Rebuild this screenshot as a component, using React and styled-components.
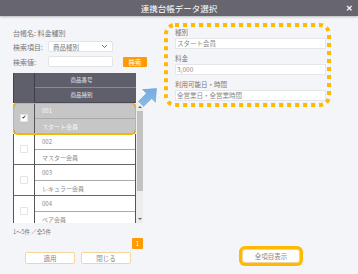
import styled, { createGlobalStyle } from 'styled-components';

const GlobalStyle = createGlobalStyle`
  html, body {
    margin: 0;
    padding: 0;
    background: #f4f5f9;
  }

  body {
    font-family: "Noto Sans CJK JP", "Noto Sans", sans-serif;
    color: #777;
  }
`;

const Dialog = styled.div`
  width: 358px;
  height: 274px;
  display: flex;
  flex-direction: column;
  overflow: hidden;
`;

const TitleBar = styled.header`
  flex: none;
  height: 16px;
  display: grid;
  grid-template-columns: 1fr auto 1fr;
  align-items: center;
  background: #67666f;
  color: #fff;
  box-shadow: 0 1px 2px rgba(0, 0, 0, .25);
`;

const Title = styled.h1`
  grid-column: 2;
  margin: 0;
  font-size: 8.5px;
  font-weight: 400;
  line-height: 16px;
`;

const Close = styled.span`
  justify-self: end;
  margin-right: 5px;
  font-family: "DejaVu Sans", sans-serif;
  font-size: 9px;
  font-weight: 700;
  line-height: 16px;
`;

const Body = styled.div`
  flex: 1;
  position: relative;
  display: grid;
  grid-template-columns: 150px 1fr;
`;

const LeftPane = styled.section`
  display: flex;
  flex-direction: column;
  padding: 12px 0 0 13px;
`;

const Info = styled.div`
  font-size: 7px;
  line-height: 10px;
`;

const FieldRow = styled.div`
  display: flex;
  align-items: center;
  height: 11px;
  margin-top: ${p => p.$gap}px;
`;

const FieldLabel = styled.span`
  width: 35px;
  font-size: 7px;
`;

const SelectBox = styled.div`
  box-sizing: border-box;
  width: 65px;
  height: 11px;
  display: flex;
  align-items: center;
  justify-content: space-between;
  padding: 0 4px;
  background: #fff;
  border: 1px solid #e4e4e6;
  border-radius: 2px;
  font-size: 6.5px;
  color: #777;
`;

const TextBox = styled.div`
  box-sizing: border-box;
  width: 65px;
  height: 11px;
  background: #fff;
  border: 1px solid #e4e4e6;
  border-radius: 2px;
`;

const SearchButton = styled.button`
  width: 24px;
  height: 10px;
  margin-left: 10px;
  padding: 0;
  border: 0;
  border-radius: 1px;
  background: #ff9a00;
  color: #fff;
  font-family: inherit;
  font-size: 6.5px;
  line-height: 10px;
`;

const TableFrame = styled.div`
  margin-top: 6px;
  width: 130px;
  display: grid;
  grid-template-columns: 123px 7px;
  grid-template-rows: 30px 120px;
`;

const Head = styled.div`
  display: grid;
  grid-template-columns: 21px 1fr;
  grid-template-rows: 15px 15px;
  background: #5f5e6b;
  border-left: 1px solid #45444f;
`;

const HeadCheck = styled.div`
  grid-row: span 2;
  border-right: 1px solid #3e3d49;
`;

const HeadCell = styled.div`
  display: flex;
  align-items: center;
  justify-content: center;
  padding-right: 8px;
  font-size: 5.5px;
  color: #e4e4e8;
  border-bottom: 1px solid ${p => (p.$last ? '#4a4956' : '#8b8a95')};
`;

const Rows = styled.div`
  grid-column: 1;
  overflow: hidden;
  background: #fff;
`;

const Row = styled.div`
  position: relative;
  display: grid;
  grid-template-columns: 21px 1fr;
  border-left: 1px solid #555;
  border-right: 1px solid #555;
  background: ${p => (p.$selected ? '#c6c6c6' : '#fff')};
  color: ${p => (p.$selected ? '#f6f6f6' : '#888')};
  ${p => p.$selected && `
    z-index: 1;
    outline: 2px solid #f7b500;
    outline-offset: -1px;
    border-radius: 5px;
  `}
`;

const CheckCell = styled.div`
  grid-row: span 2;
  display: flex;
  align-items: center;
  justify-content: center;
  border-right: 1px solid #555;
  border-bottom: 1px solid #666;
`;

const Check = styled.span`
  box-sizing: border-box;
  width: 8px;
  height: 8px;
  display: flex;
  align-items: center;
  justify-content: center;
  background: #fff;
  border: 1px solid #e2e2e2;
  border-radius: 1px;
  color: #333;
  font-family: "DejaVu Sans", sans-serif;
  font-size: 5.5px;
  line-height: 1;
`;

const SubCell = styled.div`
  height: ${p => (p.$last ? 14 : 15)}px;
  display: flex;
  align-items: center;
  padding-left: 7px;
  font-size: 6px;
  border-bottom: 1px solid ${p => (p.$last ? '#666' : '#a9a9a9')};
`;

const Scrollbar = styled.div`
  grid-column: 2;
  display: flex;
  flex-direction: column;
  align-items: center;
  background: #ededed;
`;

const ScrollArrow = styled.span`
  width: 0;
  height: 0;
  margin: 3px 0 2px;
  border-left: 2px solid transparent;
  border-right: 2px solid transparent;
  ${p => (p.$down
    ? 'border-top: 2px solid #666; margin-top: auto; margin-bottom: 3px;'
    : 'border-bottom: 2px solid #666;')}
`;

const Thumb = styled.span`
  width: 6px;
  height: 80px;
  margin-top: 1px;
  background: #c2c2c2;
`;

const Count = styled.div`
  margin-top: 4px;
  height: 10px;
  display: flex;
  align-items: center;
  font-size: 5.5px;
`;

const Badge = styled.span`
  align-self: flex-end;
  width: 11px;
  height: 11px;
  margin: 1px 7px 0 0;
  display: flex;
  align-items: center;
  justify-content: center;
  background: #ff9a00;
  border-radius: 1px;
  color: #fff;
  font-size: 6px;
`;

const ButtonRow = styled.div`
  width: 130px;
  margin-top: 3px;
  display: flex;
  justify-content: center;
  gap: 6px;
`;

const Button = styled.button`
  box-sizing: border-box;
  width: ${p => p.$width || 50}px;
  height: ${p => p.$height || 12}px;
  display: flex;
  align-items: center;
  justify-content: center;
  padding: 0;
  background: #fff;
  border: 1px solid #f6d59c;
  border-radius: 2px;
  color: #888;
  font-family: inherit;
  font-size: 6.5px;
`;

const RightPane = styled.section`
  display: flex;
  flex-direction: column;
  padding: 7px 0 0 14px;
`;

const Highlight = styled.div`
  position: relative;
  box-sizing: border-box;
  width: 167px;
  height: 84px;
  padding: 4px 5px 6px 11px;
`;

const DottedFrame = styled.svg`
  position: absolute;
  inset: 0;
  width: 167px;
  height: 84px;
  pointer-events: none;
`;

const Field = styled.div`
  margin-top: ${p => p.$gap || 0}px;
`;

const FieldName = styled.div`
  font-size: 6.5px;
  line-height: 10px;
  color: #777;
`;

const FieldValue = styled.div`
  box-sizing: border-box;
  height: 11px;
  margin-top: 1px;
  padding-left: 1px;
  background: #fff;
  border: 1px solid #e6e6ea;
  font-size: 6.5px;
  line-height: 9px;
  color: #888;
`;

const ShowAll = styled(Button)`
  margin: auto 0 11px 78px;
  border-radius: 3px;
  box-shadow: 0 0 0 3px #ffb900;
`;

const Arrow = styled.svg`
  position: absolute;
  left: 136px;
  top: 67px;
  width: 26px;
  height: 26px;
`;

const Chevron = () => (
  <svg width="7" height="5" viewBox="0 0 7 5">
    <polyline points="1,1 3.5,3.5 6,1" fill="none" stroke="#777" strokeWidth="1" />
  </svg>
);

const rows = [
  { no: '001', kind: 'スタート会員', checked: true },
  { no: '002', kind: 'マスター会員' },
  { no: '003', kind: 'レキュラー会員' },
  { no: '004', kind: 'ペア会員' },
  { no: '005', kind: 'ファミリー会員' },
];

const fields = [
  { name: '種別', value: 'スタート会員' },
  { name: '料金', value: '3,000' },
  { name: '利用可能日・時間', value: '全営業日・全営業時間' },
];

export default function App() {
  return (
    <Dialog>
      <GlobalStyle />
      <TitleBar>
        <Title>連携台帳データ選択</Title>
        <Close>×</Close>
      </TitleBar>

      <Body>
        <LeftPane>
          <Info>台帳名: 料金種別</Info>
          <FieldRow $gap={3}>
            <FieldLabel>検索項目:</FieldLabel>
            <SelectBox>
              商品種別
              <Chevron />
            </SelectBox>
          </FieldRow>
          <FieldRow $gap={4}>
            <FieldLabel>検索値:</FieldLabel>
            <TextBox />
            <SearchButton>検索</SearchButton>
          </FieldRow>

          <TableFrame>
            <Head>
              <HeadCheck />
              <HeadCell>商品番号</HeadCell>
              <HeadCell $last>商品種別</HeadCell>
            </Head>
            <div />
            <Rows>
              {rows.map(row => (
                <Row key={row.no} $selected={row.checked}>
                  <CheckCell>
                    <Check>{row.checked ? '✔' : ''}</Check>
                  </CheckCell>
                  <SubCell>{row.no}</SubCell>
                  <SubCell $last>{row.kind}</SubCell>
                </Row>
              ))}
            </Rows>
            <Scrollbar>
              <ScrollArrow />
              <Thumb />
              <ScrollArrow $down />
            </Scrollbar>
          </TableFrame>

          <Count>1～5件 ／全5件</Count>
          <Badge>1</Badge>
          <ButtonRow>
            <Button>適用</Button>
            <Button>閉じる</Button>
          </ButtonRow>
        </LeftPane>

        <RightPane>
          <Highlight>
            <DottedFrame viewBox="0 0 167 84">
              <rect
                x="2" y="2" width="163" height="80" rx="9"
                fill="none"
                stroke="#ffba00"
                strokeWidth="4"
                strokeDasharray="4 4"
              />
            </DottedFrame>
            {fields.map((f, i) => (
              <Field key={f.name} $gap={i ? 4 : 0}>
                <FieldName>{f.name}</FieldName>
                <FieldValue>{f.value}</FieldValue>
              </Field>
            ))}
          </Highlight>
          <ShowAll $width={58} $height={14}>全項目表示</ShowAll>
        </RightPane>

        <Arrow viewBox="0 0 24 24">
          <defs>
            <linearGradient id="arrowFill" x1="0" y1="1" x2="1" y2="0">
              <stop offset="0" stopColor="#93c0ea" />
              <stop offset="1" stopColor="#6aa3dc" />
            </linearGradient>
          </defs>
          <polygon
            points="1,8 11.5,8 11.5,2 23,12 11.5,22 11.5,16 1,16"
            fill="url(#arrowFill)"
            stroke="#fff"
            strokeWidth="0.8"
            strokeLinejoin="round"
            transform="rotate(-45 12 12)"
          />
        </Arrow>
      </Body>
    </Dialog>
  );
}
